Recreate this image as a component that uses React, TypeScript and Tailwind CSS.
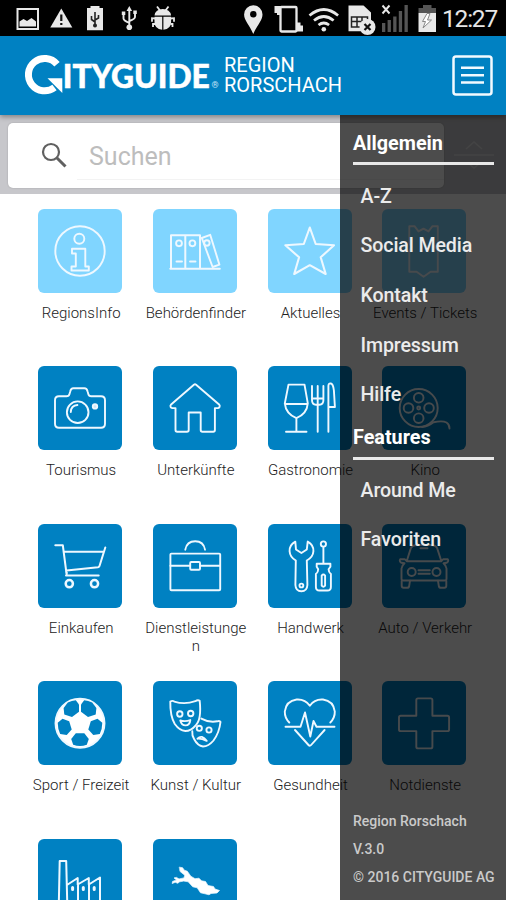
import React from "react";

const Stroke = ({ children }: { children: React.ReactNode }) => (
  <svg viewBox="0 0 84 84" className="size-[84px]" fill="none" stroke="#eef8ff" strokeWidth="1.9" strokeLinejoin="round" strokeLinecap="round">
    {children}
  </svg>
);

const icons: Record<string, React.ReactNode> = {
  info: (
    <>
      <circle cx="42" cy="42" r="24.7" />
      <circle cx="41.3" cy="29.8" r="5" />
      <path d="M34 39.7h13.3v17.8h3.5v4H33.5v-4h4.3V44.5H34z" />
    </>
  ),
  files: (
    <>
      <path d="M18 59V26.2h29V59M32.3 26.2V59M17.3 59.7h49.5" strokeWidth="2" />
      <path d="M48.8 29l8.4-3.2 9.2 29.8-6.8 2.4z" />
      <circle cx="26" cy="34.3" r="2.9" /><circle cx="39.4" cy="34.3" r="2.9" /><circle cx="53.9" cy="34" r="2.7" />
      <path d="M23.5 52.5h5.5M37 52.5h5.5" />
    </>
  ),
  star: <path d="M41.8 18.5 47.7 35 66 36.2 52.7 48.3 57.7 65 41.8 56.2 26.2 65 31.1 48.3 17.4 36.2 35.8 35z" strokeWidth="2.1" />,
  ticket: <path d="M27.3 17.2h5.2l4 5.2 5-2.8 5 2.8 4-5.2h5.3v17l-2.5 3.8 2.5 3.8v21h-7.2l-7 5-7-5h-7.3v-21l2.5-3.8-2.5-3.8z" />,
  camera: (
    <>
      <path d="M21 30.3h7.5q2.5 0 3-2.3l.7-2.5q.7-3.2 3.2-3.2h11q2.5 0 3.2 3.2l.7 2.5q.5 2.3 3 2.3H63q4 0 4 4v23.4q0 4-4 4H21q-4 0-4-4V34.3q0-4 4-4z" />
      <circle cx="39.7" cy="46.2" r="10.8" /><circle cx="57" cy="40.4" r="2.2" fill="#cfe8f6" />
      <path d="M32.8 46q.2-6.5 6.6-7" />
    </>
  ),
  house: <path d="M40.9 18.7q1.1-.9 2.2 0L66.4 38.8q.8.8 0 2.5-.5.8-1.6.8h-2.9v22q0 1.7-1.7 1.7H49.4q-1.7 0-1.7-1.7V46.5h-12v17.6q0 1.7-1.7 1.7h-9.8q-1.7 0-1.7-1.7v-22h-2.9q-1.1 0-1.8-.8-.8-1.7 0-2.5z" />,
  dining: (
    <>
      <path d="M20.5 18.6h16l3.300 18.800q-.8 10.300-11.400 14.800Q17.800 47.700 16.800 37.400zM16.800 38h22.900M28.400 52.200v13.600M18 65.800h20.500" />
      <path d="M44 20v14q0 4.700 4 4.700h3.400q4 0 4-4.700V20M49.700 20v45.800M44.500 32.500h10.400" />
      <path d="M60.400 65.800V20q0-3 2.500-2.500 2.300.6 3 7l1 16.500h-6.500" />
    </>
  ),
  film: (
    <>
      <circle cx="36.700" cy="42" r="19" />
      <circle cx="36.700" cy="31.800" r="4.800" /><circle cx="36.700" cy="52.200" r="4.800" /><circle cx="26.500" cy="42" r="4.800" /><circle cx="47" cy="42" r="4.800" />
      <circle cx="36.700" cy="42" r="1.500" />
      <path d="M40 61q6-.5 11.500-4.700 9-2 13 .2 3 1.800 3 6" />
    </>
  ),
  cart: (
    <>
      <path d="M17.300 21.200h7.500L28.700 51M25.500 27.700h40.300M67.300 23.500 61.500 42q-.3 1-1.500 1.200L28.500 46.500q-1 2 .5 2.500M28 51.600h32.700" strokeWidth="2" />
      <circle cx="31.300" cy="59.700" r="3.600" strokeWidth="2.500" /><circle cx="56.500" cy="59.700" r="3.600" strokeWidth="2.500" />
    </>
  ),
  briefcase: (
    <>
      <rect x="17.400" y="29.600" width="49.800" height="36.700" rx="1" />
      <path d="M32.300 25.700q1.500-8.400 9.900-8.400t9.800 8.400M17.400 41.700h19.800M47 41.700h20" />
      <rect x="37.200" y="38" width="9.800" height="7.700" rx="1" />
    </>
  ),
  tools: (
    <>
      <path d="M27.300 17.600q-6 3.300-5.700 9.600.3 5.800 6.200 9.300L27.400 61q.3 6.200 6 6.200t6-6.200l-.6-24.500q6.300-3.500 6.600-9.300.3-6.300-5.700-9.600l-.9 7.900-5.400 3.500-5.400-3.500z" />
      <circle cx="33.400" cy="61.500" r="1.900" />
      <circle cx="55.400" cy="20" r="2.600" />
      <path d="M55.400 23v16.500M48.700 39.700h13.700v3l-1.800 2.500q0 3 2.300 4.800v13q0 3.500-3.500 3.500h-8q-3.500 0-3.500-3.500V50q2.300-1.800 2.300-4.800l-1.500-2.500zM53.700 51.500q1.700-2 3.400 0v10.200q-1.700 2-3.400 0z" />
    </>
  ),
  car: (
    <>
      <path d="M24.700 37.200h34.700l-4.100-12.600q-1-3.600-7.300-3.600H36q-6.300 0-7.300 3.600zM24.700 37.200l-2-2h-4.500q-1.300 2.300 1.300 3.600l3 .5q-2.700 2.500-3 5.200v10.200q0 1.800 2 1.800h41q2 0 2-1.800V44.500q-.3-2.700-3-5.200l3-.5q2.600-1.300 1.300-3.600h-4.500l-2 2" />
      <path d="M19.700 57v4.800q0 2 2 2h3.300q2 0 2.200-2l.8-5M64.300 57v4.800q0 2-2 2H59q-2 0-2.200-2l-.8-5M36.500 46.300h11.300M36.500 49.700h11.300M38.500 24.300h7" />
      <circle cx="29.700" cy="48" r="4" /><circle cx="54.500" cy="48" r="4" />
    </>
  ),
  ball: (
    <>
      <circle cx="42" cy="42.200" r="24.500" fill="#fff" />
      <g fill="#0081c2" stroke="none">
        <path d="M29.800 21.500q4-2 8-2.200l3.200 4.200v7.200l-7 5.200-7.700-2.500-.7-6.500z" />
        <path d="M54.200 21.500q-4-2-8-2.200L43 23.500v7.200l7 5.200 7.700-2.500.7-6.500z" />
        <path d="M24.500 37.800l-4.800 4q0 6 2.500 11.300l6.500.8 5-5.500-2.500-8.200z" />
        <path d="M59.500 37.800l4.800 4q0 6-2.500 11.300l-6.500.8-5-5.500 2.500-8.200z" />
        <path d="M37.800 52.300h8.500l4.500 5.700-2 5.700q-6.800 2.600-13.600 0l-2-5.700z" />
      </g>
    </>
  ),
  masks: (
    <>
      <path d="M17.300 20.500q2.200-1.300 4 .1 10.400 3.300 21-.4 2.500-1.600 4.400-.4 2 18.500-4 24.500-4.700 5.700-10.400 5.700-5.900-.5-10.500-7Q17 35 17.300 20.500z" />
      <circle cx="26.800" cy="33" r="2.700" /><circle cx="37.700" cy="32.500" r="2.700" />
      <path d="M27.300 39.500q5 1.500 10-.4-.5 5.200-4.800 5.300-4 0-5.200-4.900z" />
      <path d="M48.300 37.600q7.500 4.200 16 2.700 2.500-.9 3.200.7-1.200 10.700-7 18.500-5 6-10.500 6-5.300-.6-8.800-7.200-2.400-3.800-1.900-8" />
      <circle cx="46.300" cy="47.300" r="2.600" /><circle cx="56" cy="49" r="2.600" />
      <path d="M44.500 57.700q4.400-4.600 9.200 2.200-5.200-2.500-9.200-2.200z" />
    </>
  ),
  heart: <path d="M21.300 41.500q-4.700-4.700-4.500-11 1.300-10.500 11.800-12 8.500-.6 13.200 6.200 4.700-6.800 13.200-6.200 10.500 1.500 11.800 12 .2 6.300-4.500 11M17.500 45.800h15l4.500-14.300 5.300 24 3.200-15.500 3 5.800h18M27 49l13.500 15q1.300 1.500 2.600 0l13.500-15" />,
  plus: <path d="M36 17.400h12.700q1.700 0 1.700 1.700v15.600h15q1.700 0 1.700 1.700v12q0 1.700-1.700 1.700h-15v15.600q0 1.700-1.700 1.700H36q-1.700 0-1.700-1.700V50.100H18.700q-1.700 0-1.700-1.700v-12q0-1.700 1.700-1.700h15.600V19.100q0-1.700 1.700-1.700z" />,
  factory: (
    <>
      <path d="M20.700 70 21.700 22h6.500l1.200 48M29.700 45.500l10-6.500v6.500L50.800 39v6.500L62 38.500V70M40 45.500V70M51 45.500V70" strokeWidth="2" />
      <path d="M34.600 48.500v2M45.300 48.500v2M56.200 48.500v2" strokeWidth="3" />
    </>
  ),
  lake: <path d="M26.600 28.200l3 .5 1.700 2.500 3 1 3.500 5 4.200 2.500 4-.5 2.500 2.600 4 .7 2.500 4 5.500 1 1.500 2.500 4.500 1.500-2.500 2.500-6 .5-2 1.300-4-1-4.500-1-3.300-5-4.500-1-4.500-5-4.500-.7-4 .7-2 1.500-2.500-1-3 1.300.3-2.200 4-1.500-2.500-2 2.500-.5 2.500 1.500 5-1 .7-2.700-4.500-3.600z" fill="#fff" strokeWidth=".7" />,
};

const tiles: [string, string][] = [
  ["info", "RegionsInfo"], ["files", "Behördenfinder"], ["star", "Aktuelles"], ["ticket", "Events / Tickets"],
  ["camera", "Tourismus"], ["house", "Unterkünfte"], ["dining", "Gastronomie"], ["film", "Kino"],
  ["cart", "Einkaufen"], ["briefcase", "Dienstleistungen"], ["tools", "Handwerk"], ["car", "Auto / Verkehr"],
  ["ball", "Sport / Freizeit"], ["masks", "Kunst / Kultur"], ["heart", "Gesundheit"], ["plus", "Notdienste"],
  ["factory", ""], ["lake", ""],
];

const StatusBar = () => (
  <div className="flex h-9 shrink-0 bg-black">
    <svg viewBox="0 0 440 36" className="h-9 w-[440px]" fill="#e8e8e8">
      <path d="M17.500 9h20.500v20H17.500z" fill="none" stroke="#e8e8e8" strokeWidth="2" />
      <path d="M19.500 26.500v-5l4-2.500 3.500 2 4.500-3 4.500 3.500v5z" />
      <path d="M61.300 8.500 72.300 27.500H50.300z" />
      <path d="M61.300 14.500v6.500M61.300 23v2" stroke="#111" strokeWidth="2.200" />
      <path d="M87 8h3.500V6h9v2h3.500v22.300H87z" />
      <path d="M95 12v14.500M91.500 16v3.500l3.500 2.500M98.500 15v3l-3.500 2" stroke="#222" strokeWidth="1.600" fill="none" />
      <circle cx="95" cy="25.500" r="2" fill="#222" />
      <g fill="none" stroke="#e8e8e8" strokeWidth="1.900"><path d="M129.300 9v18M123.500 14v4.500q0 2 5.800 4.500M135 13v4q0 2-5.700 4" /></g>
      <circle cx="129.300" cy="27.300" r="2.800" /><path d="M126.500 11l2.800-5 2.800 5zM121.800 11.500h3.500v3.500h-3.500zM133.300 10.500h3.500V14h-3.500z" />
      <path d="M154.500 15.500q1-6.500 8.300-6.500t8.300 6.500zM154.500 16.700h7.700v13q-7.700-1-7.700-7.500zM163.400 16.700h7.700v5.500q0 6.500-7.700 7.500z" />
      <path d="M157 6.500l3 4M168.500 6.500l-3 4M155 18.500l-3-.3v3.500M155 24h-2v3M171 18.500l3-.3v3.500M170.500 24h2v3" stroke="#e8e8e8" strokeWidth="1.800" fill="none" />
      <path d="M253.300 5.300a9.200 9.200 0 0 1 9.200 9.200c0 6-5.200 10.200-9.200 19.500-4-9.300-9.200-13.500-9.200-19.500a9.200 9.200 0 0 1 9.200-9.200z" /><circle cx="253.300" cy="14.200" r="3.200" fill="#000" />
      <rect x="280.500" y="7" width="16" height="24.500" rx="1" fill="none" stroke="#e8e8e8" strokeWidth="2.300" />
      <path d="M274.500 6h6.500v9h-4v-2h-2.500zM303 31.500h-6.500v-9h4v3h2.500z" />
      <g fill="none" stroke="#e8e8e8" strokeWidth="2.700"><path d="M309.500 15.500q14.300-12 28.600 0M314 20.500q9.800-8 19.600 0M318.500 25q5.300-4 10.600 0" /></g><circle cx="323.800" cy="29.300" r="2.300" />
      <path d="M348.500 5.500h15l7.500 7v18.700h-22.500z" /><path d="M351.500 17h16v10h-16zM357 17v10M362 17v10M351.500 21.500h16" fill="none" stroke="#222" strokeWidth="1.500" />
      <circle cx="367.500" cy="27" r="8" /><path d="M364.500 24l6 6M370.500 24l-6 6" stroke="#111" strokeWidth="2.200" />
      <path d="M382.500 5.500l7 8M389.500 5.500l-7 8" stroke="#e8e8e8" strokeWidth="1.900" />
      <g fill="#555"><path d="M382 23h3.300v9H382zM387.600 20h3.300v12h-3.300zM393.200 16.500h3.300V32h-3.300zM398.800 11h3.300v21h-3.300zM404.500 5h3.300v27h-3.300z" /></g>
      <path d="M418.500 8h4.500V5h8.500v3h4.500v5h-17.500z" fill="#555" /><path d="M418.500 13H436v19h-17.500z" /><path d="M427 13.500l-4.500 8h3l-2.500 6.500 8.500-8h-4l2.500-6.500z" fill="#fff" stroke="#888" strokeWidth="1" />
    </svg>
    <span className="w-[66px] pl-0.5 text-[24.5px] leading-[38px] tracking-[-1.2px] text-[#e6e6e6]">12:27</span>
  </div>
);

const Header = () => (
  <header className="z-10 flex h-[79px] shrink-0 items-center bg-[#0081c2] pl-[22px] pr-[13px] text-white shadow-[0_2px_5px_rgba(0,0,0,0.35)]">
    <svg viewBox="22 36 200 79" className="h-[79px] w-[200px] shrink-0">
      <path d="M57 64.200A16.200 16.200 0 1 0 54.500 87.500" fill="none" stroke="#fff" strokeWidth="7" />
      <path d="M47.500 78.300h14.800v14.700z" fill="#fff" />
      <text x="62.800" y="87.500" fontFamily="Lato" fontWeight="900" fontSize="32" textLength="147" lengthAdjust="spacingAndGlyphs" fill="#fff" stroke="#fff" strokeWidth=".5">ITYGUIDE</text>
      <text x="211.500" y="88" fontFamily="Roboto" fontWeight="700" fontSize="9" fill="#bfe2f5">®</text>
    </svg>
    <div className="-mt-[2px] ml-[2px] text-[20px] leading-5">
      <div>REGION</div>
      <div>RORSCHACH</div>
    </div>
    <svg viewBox="0 0 41 41" className="ml-auto size-[41px]" fill="none" stroke="#f2faff" strokeWidth="2.500">
      <rect x="1.500" y="1.500" width="38" height="38" rx="2.500" />
      <path d="M9 12.800h23M9 20.200h23M9 27.400h23" />
    </svg>
  </header>
);

const SearchBar = () => (
  <div className="flex h-[79px] shrink-0 items-center gap-2.5 bg-[#c7c7cb] pb-[6px] pl-2 pt-2">
    <div className="flex h-[65px] w-[436px] items-center rounded-[5px] bg-white pl-[33px] shadow-[0_0_2px_rgba(0,0,0,0.2)]">
      <svg viewBox="0 0 26 26" className="-mt-[2px] size-[26px]" fill="none" stroke="#606060" strokeWidth="2.200">
        <circle cx="10" cy="10" r="8" />
        <path d="M15.500 15.500l9 9" strokeWidth="3" />
      </svg>
      <div className="ml-2.5 flex h-[49px] flex-1 items-center border-b border-[#f3f3f3] pl-[12px] pt-[3px] text-[25px] text-[#bdbdbd]">Suchen</div>
    </div>
    <svg viewBox="0 0 40 40" className="size-10" fill="none" stroke="#e2e2e4" strokeWidth="1.600">
      <path d="M0 19h40M12 13l8-7 8 7M14 27l6 5 6-5" />
    </svg>
  </div>
);

const sectionTitle = "border-b-[3px] border-[#e8e8e8] text-[19.8px] font-bold text-white";

const SideMenu = () => (
  <aside className="absolute bottom-0 right-0 top-[115px] z-20 flex w-[166px] flex-col bg-black/70 pl-[13px] pr-[12px]">
    <h2 className={`${sectionTitle} h-[50px] pt-[17px] leading-6`}>Allgemein</h2>
    <ul className="pl-[7.500px] pt-[6.500px] text-[19.600px] font-medium tracking-[-0.1px] text-[#ebebeb]">
      {["A-Z", "Social Media", "Kontakt", "Impressum", "Hilfe"].map((t) => (
        <li key={t} className="flex h-[49.700px] items-center whitespace-nowrap">{t}</li>
      ))}
    </ul>
    <h2 className={`${sectionTitle} -mt-[7px] h-[47px] pt-[13px] leading-6`}>Features</h2>
    <ul className="pl-[7.500px] pt-[6px] text-[19.600px] font-medium tracking-[-0.1px] text-[#ebebeb]">
      {["Around Me", "Favoriten"].map((t) => (
        <li key={t} className="flex h-[49px] items-center whitespace-nowrap">{t}</li>
      ))}
    </ul>
    <div className="mt-auto whitespace-nowrap pb-[9px] text-[14px] font-medium leading-7 text-[#cacaca]">
      <p>Region Rorschach</p>
      <p>V.3.0</p>
      <p>© 2016 CITYGUIDE AG</p>
    </div>
  </aside>
);

export default function App() {
  return (
    <div className="relative flex h-[900px] w-[506px] flex-col overflow-hidden bg-white font-[Roboto,sans-serif]">
      <StatusBar />
      <Header />
      <SearchBar />
      <main className="grid w-[481.600px] grid-cols-4 auto-rows-[157.500px] pl-[22.800px] pt-[14.500px]">
        {tiles.map(([icon, label], i) => (
          <div key={icon} className="flex flex-col items-center">
            <div className={`size-[84px] shrink-0 rounded-[6px] ${i < 4 ? "bg-[#80d5ff]" : "bg-[#0081c2]"}`}>
              <Stroke>{icons[icon]}</Stroke>
            </div>
            <div className="relative left-px mt-[11px] w-[105px] break-all text-center text-[15px] font-light leading-[18px] text-[#222]">{label}</div>
          </div>
        ))}
      </main>
      <SideMenu />
    </div>
  );
}
